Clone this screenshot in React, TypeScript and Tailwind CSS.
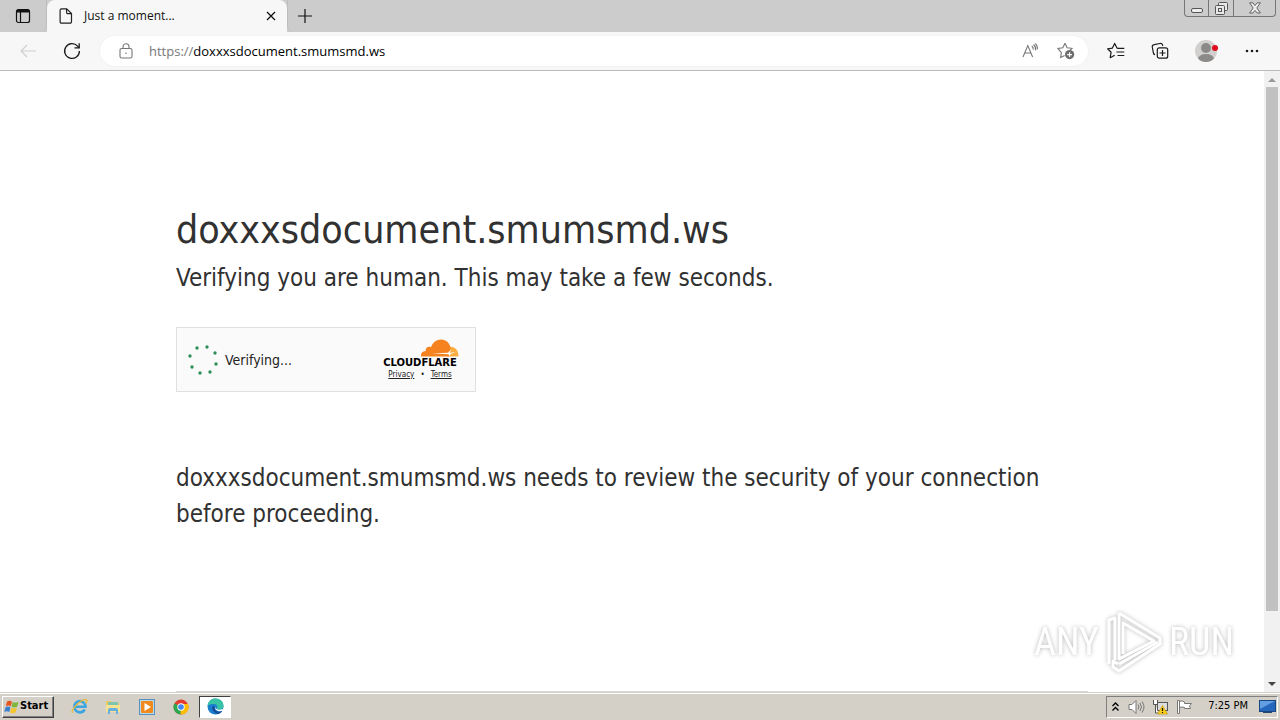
import type { ReactNode } from 'react'

const dots = [
  [11, 3], [21, 2], [29, 8], [30, 19], [24, 27], [14, 28], [6, 22], [4, 11],
]

function IconButton({ label, className = '', children }: { label: string; className?: string; children: ReactNode }) {
  return (
    <button aria-label={label} className={`flex h-8 shrink-0 items-center justify-center ${className}`}>
      {children}
    </button>
  )
}

function TitleBar() {
  return (
    <header className="flex h-8 shrink-0 items-start bg-[#cccccc]">
      <IconButton label="Tab actions" className="w-[47px] rounded-br-md border-r border-[#bdbdbd]">
        <svg width="16" height="16" viewBox="0 0 16 16" fill="none" stroke="#111">
          <rect x="1.5" y="1.5" width="13" height="13" rx="2" strokeWidth="1.2" />
          <path d="M2 3h12" strokeWidth="3" />
          <path d="M5.5 4v10" strokeWidth="1.2" />
        </svg>
      </IconButton>

      {/* Active tab */}
      <div className="flex h-8 w-60 shrink-0 items-center rounded-t-lg bg-[#f7f7f7] pl-3 pr-2">
        <svg width="14" height="16" viewBox="0 0 14 16" fill="none" stroke="#222" strokeWidth="1.2">
          <path d="M2.5.8h5.2l4.8 4.8v8.2a1.4 1.4 0 0 1-1.4 1.4H2.5a1.4 1.4 0 0 1-1.4-1.4V2.2A1.4 1.4 0 0 1 2.5.8Z" />
          <path d="M7.6 1v3.5a1.2 1.2 0 0 0 1.2 1.2h3.6" />
        </svg>
        <span className="ml-[11px] flex-1 text-xs text-[#111]">Just a moment...</span>
        <button aria-label="Close tab" className="flex size-4 items-center justify-center">
          <svg width="10" height="10" viewBox="0 0 10 10" stroke="#111" strokeWidth="1.3">
            <path d="M1 1l8 8M9 1L1 9" />
          </svg>
        </button>
      </div>
      <IconButton label="New tab" className="w-[35px] rounded-bl-md border-l border-[#bdbdbd]">
        <svg width="14" height="14" viewBox="0 0 14 14" stroke="#111" strokeWidth="1.2">
          <path d="M7 0v14M0 7h14" />
        </svg>
      </IconButton>

      {/* Window controls */}
      <div className="ml-auto mr-1 flex h-[17px] rounded-b-[4px] border border-t-0 border-[#777]">
        <button aria-label="Minimize" className="flex w-6 items-center justify-center border-r border-[#777]">
          <svg width="12" height="14" viewBox="0 0 12 14" fill="#eee" stroke="#555">
            <rect x=".5" y="7.5" width="11" height="4" rx="1.5" />
          </svg>
        </button>
        <button aria-label="Restore" className="flex w-[25px] items-center justify-center border-r border-[#777]">
          <svg width="13" height="14" viewBox="0 0 13 14" fill="#e8e8e8" stroke="#555">
            <rect x="3.5" y="1.5" width="9" height="8" rx="1" />
            <rect x=".5" y="4.5" width="9" height="9" rx="1" />
            <rect x="3.5" y="7.5" width="3" height="3" />
          </svg>
        </button>
        <button aria-label="Close" className="flex w-[41px] items-center justify-center">
          <svg width="12" height="12" viewBox="0 0 12 12" fill="#eee" stroke="#555" strokeWidth=".9">
            <path d="M.6.8h3.2L6 3.6 8.2.8h3.2L7.8 6l3.6 5H8.2L6 8.4 3.8 11H.6l3.6-5Z" />
          </svg>
        </button>
      </div>
    </header>
  )
}

function Toolbar() {
  return (
    <div className="flex h-[39px] shrink-0 items-center border-b border-[#bcbcbc] bg-[#f7f7f7] pr-3">
      <IconButton label="Back" className="ml-2 w-10">
        <svg width="16" height="14" viewBox="0 0 16 14" fill="none" stroke="#cfcfcf" strokeWidth="1.2">
          <path d="M16 7H1M7 1L1 7l6 6" />
        </svg>
      </IconButton>
      <IconButton label="Refresh" className="ml-1 w-10">
        <svg width="18" height="18" viewBox="0 0 18 18" fill="none" stroke="#1b1b1b" strokeWidth="1.3">
          <path d="M16.4 9A7.4 7.4 0 1 1 14.6 4.2L16 5.8" />
          <path d="M16.2 1.2v4.7h-4.7" />
        </svg>
      </IconButton>

      <div className="ml-2 flex h-[30px] flex-1 items-center rounded-full bg-white pl-[18px] pr-[10px] shadow-[0_0_1px_1px_#f2f2f2]">
        <svg width="16" height="16" viewBox="0 0 16 16" fill="none" stroke="#777" strokeWidth="1.1">
          <rect x="2" y="5.5" width="12" height="9.5" rx="1.6" />
          <path d="M5 5.5V3.8a3 3 0 0 1 6 0v1.7" />
          <circle cx="8" cy="10.3" r=".8" fill="#777" stroke="none" />
        </svg>
        <a href="https://doxxxsdocument.smumsmd.ws" className="ml-[15px] text-[13px] leading-5 text-black">
          <span className="text-[#777]">https://</span>doxxxsdocument.smumsmd.ws
        </a>
        <IconButton label="Read aloud" className="ml-auto w-6">
          <svg width="17" height="16" viewBox="0 0 17 16" fill="none" stroke="#777" strokeWidth="1.1">
            <path d="M1 14L5.8 2.6 10.6 14M2.7 10h6.2" />
            <path d="M9.8 3a4 4 0 0 1 1.4 3.6M11.6 1.5a6.5 6.5 0 0 1 2 5.8M13.4.4a8 8 0 0 1 2.1 5.8" />
          </svg>
        </IconButton>
        <IconButton label="Add to favorites" className="ml-3 w-6">
          <svg width="18" height="18" viewBox="0 0 18 18" fill="none" stroke="#777" strokeWidth="1.1">
            <path d="M8 1.2l2.1 4.5 4.9.6-2.6 2.5M7.6 13.4l-4 2.2.8-5L.9 6.4l4.9-.7L8 1.2" />
            <circle cx="12.6" cy="12.6" r="4.6" fill="#6d6d6d" stroke="none" />
            <path d="M12.6 10.2V15M10.2 12.6H15" stroke="#fff" />
          </svg>
        </IconButton>
      </div>

      <IconButton label="Favorites" className="ml-4 w-6">
        <svg width="18" height="18" viewBox="0 0 18 18" fill="none" stroke="#1b1b1b" strokeWidth="1.2">
          <path d="M11.3 6.3L10 6.1 7.7 1.4 5.4 6.1l-4.8.7 3.5 3.4-.9 5.5 4.5-2.4" strokeLinejoin="round" />
          <path d="M11 6.4h6.3M9.4 10h7.9M10.5 13.5h6.8" />
        </svg>
      </IconButton>
      <IconButton label="Collections" className="ml-5 w-6">
        <svg width="18" height="18" viewBox="0 0 18 18" fill="none" stroke="#1b1b1b" strokeWidth="1.2">
          <rect x="6.3" y="5.8" width="10.4" height="10.4" rx="2" />
          <path d="M11.5 8v6M8.5 11h6" />
          <path d="M4 12.8A2.5 2.5 0 0 1 2.4 11L1.3 5.2A2.3 2.3 0 0 1 3.2 2.6L9 1.5a2.3 2.3 0 0 1 2.6 1.7l.2.8" />
        </svg>
      </IconButton>
      <IconButton label="Profile" className="ml-[22px] w-6">
        <svg width="24" height="24" viewBox="0 0 24 24">
          <clipPath id="avatar"><circle cx="12" cy="12" r="11" /></clipPath>
          <circle cx="12" cy="12" r="11" fill="#d2d0ce" />
          <g clipPath="url(#avatar)" fill="#8c8a88">
            <circle cx="12" cy="9" r="5" />
            <ellipse cx="12" cy="20" rx="8" ry="5" />
          </g>
          <circle cx="21" cy="9" r="3" fill="#e00b1c" />
        </svg>
      </IconButton>
      <IconButton label="Settings and more" className="ml-[18px] w-8">
        <svg width="14" height="4" viewBox="0 0 14 4" fill="#1b1b1b">
          <circle cx="2" cy="2" r="1.3" /><circle cx="7" cy="2" r="1.3" /><circle cx="12" cy="2" r="1.3" />
        </svg>
      </IconButton>
    </div>
  )
}

function Challenge() {
  return (
    <div className="mt-[31px] flex h-[65px] w-[300px] items-center justify-between border border-[#e0e0e0] bg-[#fafafa] pl-[9px] pr-4">
      <div className="flex items-center gap-[5px]">
        <svg width="34" height="30" viewBox="0 0 34 30" fill="#2f8f5b">
          {dots.map(([x, y]) => <circle key={`${x}-${y}`} cx={x} cy={y} r="1.7" />)}
        </svg>
        <span className="text-sm text-[#232323]">Verifying...</span>
      </div>
      <div className="flex w-[78px] flex-col items-center">
        <svg width="78" height="18" viewBox="0 0 78 18" aria-label="Cloudflare">
          <path fill="#fbad41" d="M66 17.5L67.5 8.2c5-1.5 10 2 10 9.3Z" />
          <path fill="#f6821f" d="M40 17.5c-.3-3.2 1.5-5.2 4.7-5.4-.4-3 2.4-5.4 5.4-3.8C51.6 3.5 55.5.5 60 .5c5.3 0 9 3.8 9.5 8.7l-1.3 8.3Z" />
          <path d="M51 14.3l16-.6 3-3.5-1.2 3.8 6-1.2-5.5 2.5-.8 2.2-1-2.2Z" fill="#fff" />
        </svg>
        <span className="font-['DejaVu_Sans',sans-serif] text-[10px] leading-3 font-bold text-black">CLOUDFLARE</span>
        <div className="flex gap-[6px] text-[8px] leading-3 text-[#222]">
          <a href="#privacy" className="underline">Privacy</a>
          <span>•</span>
          <a href="#terms" className="underline">Terms</a>
        </div>
      </div>
    </div>
  )
}

function Watermark() {
  return (
    <div className="absolute right-[46px] bottom-[18px] flex items-center gap-[6px] font-['Roboto_Condensed','Open_Sans_Condensed','DejaVu_Sans_Condensed',sans-serif] text-[38px] leading-[64px] text-white drop-shadow-[0_0_2px_#b8b8b8]">
      <span>ANY</span>
      <svg width="58" height="64" viewBox="0 0 58 64" fill="none" stroke="#fff" strokeWidth="3" strokeLinejoin="round">
        <path d="M14 3l41 25v6L14 61l-6-4v-6l5 3" />
        <path d="M4 54V10l6-2v42" />
        <path d="M14 3v46l35-18L18 13v31" />
        <path d="M14 54l39-22" />
      </svg>
      <span>RUN</span>
    </div>
  )
}

function Page() {
  return (
    <div className="relative flex min-h-0 flex-1 bg-white">
      <main className="flex min-w-0 flex-1 flex-col overflow-hidden">
        <div className="mx-auto flex w-full max-w-[960px] flex-1 flex-col px-6 pt-[129px] font-['DejaVu_Sans_Condensed','DejaVu_Sans',sans-serif] text-[#313131]">
          <h1 className="text-[39px] leading-[60px]">doxxxsdocument.smumsmd.ws</h1>
          <p className="text-2xl leading-9">Verifying you are human. This may take a few seconds.</p>
          <Challenge />
          <p className="mt-[68px] text-2xl leading-9">
            doxxxsdocument.smumsmd.ws needs to review the security of your connection before proceeding.
          </p>
          <footer className="mt-auto h-px border-t border-[#d9d9d9]" />
        </div>
      </main>
      {/* Scrollbar */}
      <div className="flex w-4 shrink-0 flex-col items-center bg-[#f1f1f1]">
        <svg width="16" height="16" viewBox="0 0 16 16" className="shrink-0"><path d="M4 11l4-4 4 4Z" fill="#999" /></svg>
        <div className="h-[86%] max-h-[524px] w-3 bg-[#c1c1c1]" />
        <svg width="16" height="16" viewBox="0 0 16 16" className="mt-auto shrink-0"><path d="M4 6l4 4 4-4Z" fill="#444" /></svg>
      </div>
      <Watermark />
    </div>
  )
}

function Taskbar() {
  return (
    <footer className="flex h-7 shrink-0 items-center border-t border-[#d4d0c8] bg-[#d4d0c8] pr-[2px] shadow-[inset_0_1px_0_#ffffff]">
      <button className="ml-[2px] flex h-[22px] w-[52px] items-center border border-t-white border-r-[#404040] border-b-[#404040] border-l-white pl-px font-['DejaVu_Sans_Condensed',sans-serif] text-[11px] font-bold text-black shadow-[inset_-1px_-1px_0_#808080]">
        <svg width="16" height="16" viewBox="0 0 16 16" className="shrink-0">
          <path d="M3 2.5q2.5-1.5 5 0L6.8 7.2q-2.5-1.5-5 0Z" fill="#e8541e" />
          <path d="M8.7 3q2.5 1.5 5.8 0L13.2 7.7q-3 1.5-5.6 0Z" fill="#7db63a" />
          <path d="M1.5 8.2q2.5-1.5 5 0L5.3 13q-2.5-1.5-5 0Z" fill="#3b7fd0" />
          <path d="M7.3 8.7q2.5 1.5 5.6 0L11.6 13.5q-3 1.5-5.6 0Z" fill="#f6c52c" />
        </svg>
        Start
      </button>
      <IconButton label="Internet Explorer" className="ml-2 w-[34px]">
        <svg width="17" height="17" viewBox="0 0 17 17" fill="none">
          <path d="M13.8 11.5A5.6 5.6 0 1 1 14.5 8.8H4.5" stroke="#3aa5de" strokeWidth="2.6" />
          <path d="M1.5 15C-.5 12 10 .5 15.5 1.8c1 .7 0 2.5-.8 3.5" stroke="#e6b93a" strokeWidth="1.3" />
        </svg>
      </IconButton>
      <IconButton label="Explorer" className="w-[34px]">
        <svg width="16" height="16" viewBox="0 0 16 16">
          <path d="M1 2h5l1 2h7v9H1Z" fill="#e9c95f" />
          <path d="M3 3h10v5H3Z" fill="#7fc4ac" />
          <path d="M1 6h14v7H1Z" fill="#f7e394" />
          <path d="M3 15v-4q0-2 2-2h6q2 0 2 2v4h-2v-3H5v3Z" fill="#68aee0" />
        </svg>
      </IconButton>
      <IconButton label="Media Player" className="w-[34px]">
        <svg width="16" height="16" viewBox="0 0 16 16">
          <rect x=".5" y=".5" width="15" height="15" fill="#b9d9ef" stroke="#5791bd" />
          <rect x="2" y="2" width="12" height="12" rx="1" fill="#f08a1c" />
          <path d="M5.5 4L12 8l-6.5 4Z" fill="#fff" />
        </svg>
      </IconButton>
      <IconButton label="Chrome" className="w-[34px]">
        <svg width="16" height="16" viewBox="0 0 16 16">
          <circle cx="8" cy="8" r="7.5" fill="#e33b2e" />
          <path d="M8 8L1.5 4.3A7.5 7.5 0 0 0 7.5 15.5L10 10Z" fill="#2da94f" />
          <path d="M8 8L7.5 15.5A7.5 7.5 0 0 0 15 5H8Z" fill="#fdbd00" />
          <circle cx="8" cy="8" r="3.7" fill="#fff" />
          <circle cx="8" cy="8" r="2.8" fill="#4285f4" />
        </svg>
      </IconButton>
      <button aria-label="Edge" className="ml-px flex h-[22px] w-8 items-center justify-center border border-t-[#404040] border-r-white border-b-white border-l-[#404040] bg-white">
        <svg width="17" height="17" viewBox="0 0 17 17">
          <circle cx="8.5" cy="8.5" r="8" fill="#1c7fce" />
          <path d="M.5 8C1 3 4.5.5 8.5.5c5 0 8 3.5 8 7 0 4-4.5 5-7 3.5 1.5-1.5 1-5-2.5-5C4 6 1.5 6.5.5 8Z" fill="#38c3a5" />
          <path d="M6 7.5c-2 3 0 7.5 5 8.5 2-.5 4-2 4.5-3.5-4 2-8 .5-7.5-3Z" fill="#134e9b" />
          <path d="M8 8.5c0 3 4 4 7.5 2.5l1 1.5c-4 1.7-9 .5-8.5-4Z" fill="#fff" />
        </svg>
      </button>

      {/* Notification area */}
      <div className="ml-auto flex h-[22px] w-[172px] items-center border border-t-[#808080] border-r-white border-b-white border-l-[#808080] pl-[5px] pr-[1px] text-[11px] text-black">
        <svg width="7" height="10" viewBox="0 0 7 10" fill="none" stroke="#000" strokeWidth="1.4">
          <path d="M.5 4l3-3 3 3M.5 8.5l3-3 3 3" />
        </svg>
        <svg width="17" height="16" viewBox="0 0 17 16" fill="#fff" stroke="#777" className="ml-[9px]">
          <path d="M1 5.5h3l4-4v13l-4-4H1Z" />
          <path d="M10 5.5q2 2.5 0 5M12 4q3 4 0 8M14 2.5q4 5.5 0 11" fill="none" />
        </svg>
        <svg width="17" height="16" viewBox="0 0 17 16" className="ml-[7px]">
          <rect x="5.5" y="3.5" width="10" height="8" fill="#ddd" stroke="#555" />
          <path d="M1.5 1v4.5h4V1M3.5 5.5V14H6" fill="#fff" stroke="#555" />
          <path d="M10.5 6.5l5 8.5h-10Z" fill="#fcd11c" stroke="#b98e00" strokeWidth=".6" />
          <path d="M10.5 9v3M10.5 13v1" stroke="#111" strokeWidth="1.2" />
        </svg>
        <svg width="17" height="16" viewBox="0 0 17 16" fill="#fff" stroke="#777" className="ml-[7px]">
          <path d="M1.5 1.5h2v13h-2ZM3.5 2.5q2.5-1.5 5 .5v1.5h7l-2 2.5 1 2.5H8.5V8.5q-2.5-1-5 0Z" />
        </svg>
        <span className="ml-auto font-['DejaVu_Sans_Condensed',sans-serif] text-[11px]">7:25 PM</span>
        <svg width="17" height="15" viewBox="0 0 17 15" className="ml-[11px]">
          <rect x=".5" y="1.5" width="16" height="11" fill="#2667bd" stroke="#194781" />
          <path d="M1 2h15L1 10Z" fill="#639ee2" />
          <path d="M4 13.5h9" stroke="#27496c" />
        </svg>
      </div>
    </footer>
  )
}

export default function App() {
  return (
    <div className="flex h-screen flex-col overflow-hidden bg-white font-['Open_Sans','Noto_Sans',sans-serif]">
      <TitleBar />
      <Toolbar />
      <Page />
      <Taskbar />
    </div>
  )
}
